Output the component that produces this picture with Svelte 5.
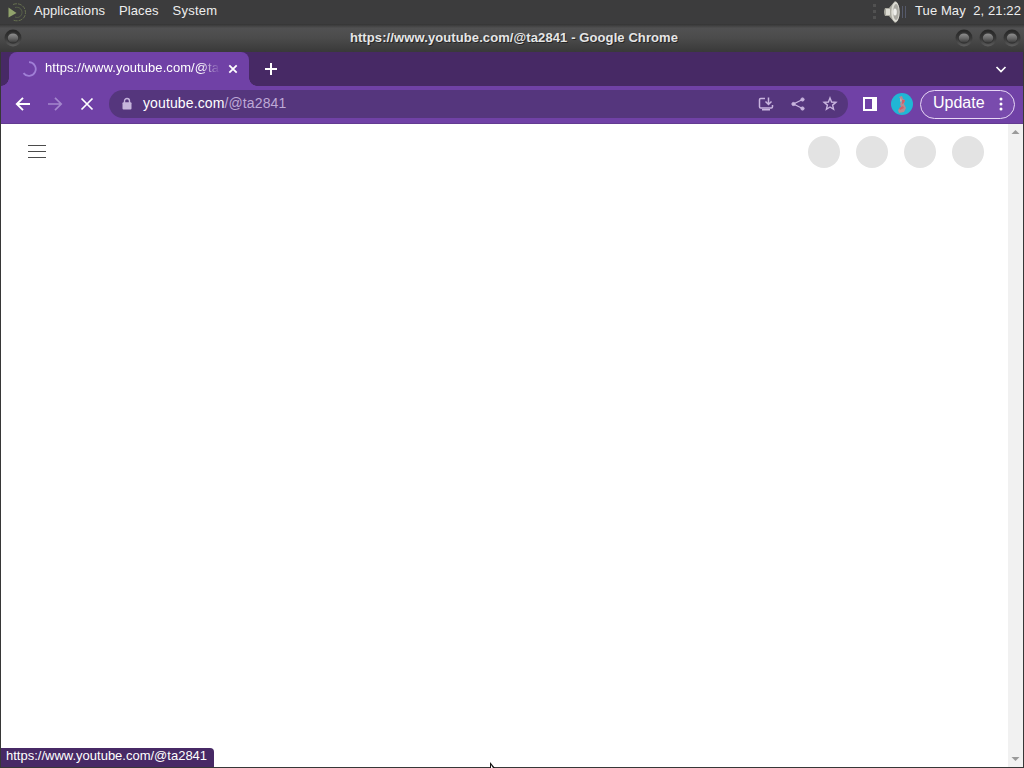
<script>
	const pageUrl = 'https://www.youtube.com/@ta2841';
	const menus = ['Applications', 'Places', 'System'];
	const windowButtons = ['minimize', 'maximize', 'close'];
	const placeholders = [1, 2, 3, 4];
</script>

{#snippet orb()}
	<svg class="orb" width="20" height="20" viewBox="0 0 20 20">
		<defs>
			<linearGradient id="orbRing" x2="0" y2="1">
				<stop offset="0" stop-color="#252525" />
				<stop offset=".5" stop-color="#363636" />
				<stop offset="1" stop-color="#5e5e5e" />
			</linearGradient>
			<linearGradient id="orbFace" x2="0" y2="1">
				<stop offset="0" stop-color="#8f8f8f" />
				<stop offset=".55" stop-color="#666" />
				<stop offset="1" stop-color="#3c3c3c" />
			</linearGradient>
		</defs>
		<circle cx="10" cy="10" r="8.5" fill="url(#orbRing)" />
		<circle cx="10" cy="9.7" r="6" fill="#333" />
		<ellipse cx="10" cy="10" rx="5.2" ry="4.5" fill="url(#orbFace)" />
	</svg>
{/snippet}

<div class="desktop">
	<header class="panel">
		<svg class="distro" width="20" height="22" viewBox="0 0 20 22" fill="none">
			<path d="M6 3.500C12 1 18.500 5 18.500 11.500S12 21.500 6 19" stroke="#66704f" stroke-dasharray="4 1" />
			<path d="M8 6.500c4-1 7 1.500 7 5s-3.500 6-7 4.500" stroke="#59634a" />
			<path d="m1.500 6.500 8 5.500-8 4.500z" fill="#91a36c" />
		</svg>
		<nav class="menus">
			{#each menus as menu}
				<span>{menu}</span>
			{/each}
		</nav>
		<svg class="volume" width="38" height="24" viewBox="0 0 38 24">
			<path d="M3 4h3v3H3zM3 10h3v3H3zM3 16h3v3H3z" fill="#515151" />
			<path d="M15 8h4l6-7q4 1 4 11t-4 11l-6-7h-4q-2-4 0-8z" fill="#aaa99f" />
			<path d="M16 9h4v6h-4z" fill="#dddcd3" />
			<ellipse cx="25.500" cy="12" rx="4.200" ry="10" fill="#deddd5" />
			<ellipse cx="26" cy="12" rx="2.800" ry="8" fill="#aaa9a2" />
			<ellipse cx="25" cy="12" rx="1.800" ry="3.500" fill="#eeeeea" />
			<path d="M32.500 6v12M35.500 6v12" stroke="#55596a" fill="none" />
		</svg>
		<span class="clock">Tue May&nbsp; 2, 21:22</span>
	</header>

	<div class="titlebar">
		{@render orb()}
		<span class="window-title">{pageUrl} - Google Chrome</span>
		<div class="window-buttons">
			{#each windowButtons as button (button)}
				{@render orb()}
			{/each}
		</div>
	</div>

	<main class="browser">
		<div class="tabs">
			<div class="tab">
				<svg class="spinner" width="16" height="16" viewBox="0 0 16 16" fill="none">
					<path d="M8 1.200a6.800 6.800 0 1 1-5.500 10.900" stroke="#a07fd6" stroke-width="1.800" />
				</svg>
				<span class="tab-title">{pageUrl}</span>
				<svg class="tab-close" width="10" height="10" viewBox="0 0 10 10">
					<path d="m1.300 1.300 7.400 7.400m0-7.400-7.400 7.400" stroke="#fff" stroke-width="1.800" />
				</svg>
			</div>
			<svg class="new-tab" width="12" height="12" viewBox="0 0 12 12">
				<path d="M6 0v12M0 6h12" stroke="#fff" stroke-width="2" />
			</svg>
			<svg class="tab-search" width="12" height="12" viewBox="0 0 12 12">
				<path d="m1.500 4 4.500 4.500L10.500 4" stroke="#fff" stroke-width="1.700" fill="none" />
			</svg>
		</div>

		<div class="toolbar">
			<svg width="16" height="16" viewBox="0 0 16 16" fill="none">
				<path d="M15 8H2m6-6.200L1.800 8 8 14.200" stroke="#fff" stroke-width="1.900" />
			</svg>
			<svg width="16" height="16" viewBox="0 0 16 16" fill="none">
				<path d="M1 8h13M8 1.800 14.200 8 8 14.200" stroke="#a486cd" stroke-width="1.700" />
			</svg>
			<svg width="16" height="16" viewBox="0 0 16 16">
				<path d="m2.500 2.500 11 11m0-11-11 11" stroke="#fff" stroke-width="1.700" />
			</svg>
			<div class="address">
				<svg width="10" height="14" viewBox="0 0 10 14">
					<path d="M2.500 6V4a2.500 2.500 0 0 1 5 0v2" fill="none" stroke="#c6b5dc" stroke-width="1.400" />
					<rect x=".5" y="5.200" width="9" height="7.300" rx="1" fill="#c6b5dc" />
				</svg>
				<span class="url"><b>youtube.com</b>/@ta2841</span>
				<div class="actions">
					<svg width="16" height="16" viewBox="0 0 16 16" fill="none" stroke="#c9b5df" stroke-width="1.500">
						<path d="M7 2.500H2.700q-1.200 0-1.200 1.200v7q0 1.200 1.200 1.200h10.600q1.200 0 1.200-1.200V9M4 13.700h8" />
						<path d="M10.500 1.500V8M7.500 5.500l3 3 3-3" />
					</svg>
					<svg width="16" height="16" viewBox="0 0 16 16" stroke="#c9b5df" fill="#c9b5df">
						<path d="m12.500 3.500-9 4.500 9 4.500" fill="none" stroke-width="1.300" />
						<circle cx="12.500" cy="3.500" r="1.600" />
						<circle cx="3.500" cy="8" r="1.600" />
						<circle cx="12.500" cy="12.500" r="1.600" />
					</svg>
					<svg width="16" height="16" viewBox="0 0 16 16" fill="none" stroke="#c9b5df" stroke-width="1.400">
						<path d="m8 2 1.600 4 4.300.3-3.300 2.800 1 4.200L8 11l-3.600 2.300 1-4.200-3.300-2.800L6.400 6z" />
					</svg>
				</div>
			</div>
			<svg class="side-panel" width="14" height="14" viewBox="0 0 14 14">
				<path d="M1 1h12v12H1z" fill="none" stroke="#fff" stroke-width="2" />
				<path d="M9 1h5v12H9z" fill="#fff" />
			</svg>
			<svg class="avatar" width="22" height="22" viewBox="0 0 22 22">
				<circle cx="11" cy="11" r="11" fill="#20b6d5" />
				<path d="m8 4 3-1 1 3 2 1-1 4 2 4-2 4-5 1-1-3 3-3-1-3 2-3z" fill="#b98b91" />
				<path d="m11 7 3 0-1 3-2 1zM8 15l4-2 1 2-4 2z" fill="#cf606c" />
				<path d="m9 5 2 2-1 3-1-2z" fill="#c9a9a9" />
			</svg>
			<div class="update">
				<span>Update</span>
				<svg width="4" height="14" viewBox="0 0 4 14" fill="#fff">
					<circle cx="2" cy="2" r="1.500" />
					<circle cx="2" cy="7" r="1.500" />
					<circle cx="2" cy="12" r="1.500" />
				</svg>
			</div>
		</div>

		<div class="viewport">
			<div class="masthead">
				<svg class="guide" width="18" height="13" viewBox="0 0 18 13">
					<path d="M0 .5h18M0 6.500h18M0 12.500h18" stroke="#4b4b4b" />
				</svg>
				<div class="placeholders">
					{#each placeholders as item (item)}
						<i></i>
					{/each}
				</div>
			</div>
			<div class="scrollbar">
				<svg width="9" height="5" viewBox="0 0 9 5"><path d="m.5 5 4-4 4 4z" fill="#9a9a9a" /></svg>
				<svg width="9" height="5" viewBox="0 0 9 5"><path d="m.5 0 4 4 4-4z" fill="#9a9a9a" /></svg>
			</div>
		</div>
	</main>

	<div class="status">{pageUrl}</div>
	<svg class="cursor" width="8" height="6" viewBox="0 0 8 6">
		<path d="M1 0v6h5z" fill="#151515" />
		<path d="M2 3v3h2z" fill="#fff" />
	</svg>
</div>

<style>
	:global(body) {
		margin: 0;
		overflow: hidden;
	}

	.desktop {
		position: relative;
		display: flex;
		flex-direction: column;
		width: 1024px;
		height: 768px;
		overflow: hidden;
		background: #373737;
		font-family: 'Liberation Sans', Arial, sans-serif;
		font-size: 13px;
		color: #fff;
		white-space: nowrap;
	}

	svg {
		display: block;
		flex-shrink: 0;
	}

	.panel {
		display: flex;
		align-items: center;
		box-sizing: border-box;
		height: 24px;
		padding: 0 3px 0 7px;
		background: #3c3c3d;
		color: #eee;
		line-height: 22px;
	}

	.menus {
		display: flex;
		gap: 14px;
		height: 24px;
		margin-left: 7px;
		letter-spacing: 0.08px;
	}

	.menus span:last-child {
		letter-spacing: 0.25px;
	}

	.volume {
		margin-left: auto;
	}

	.clock {
		height: 24px;
		margin-left: 7px;
		letter-spacing: 0.1px;
	}

	.titlebar {
		display: flex;
		align-items: center;
		justify-content: space-between;
		box-sizing: border-box;
		height: 28px;
		padding: 0 2px 0 3px;
		background: linear-gradient(#343434, #515152 15%, #4b4b4b 50%, #393939);
	}

	.window-title {
		margin-left: 51px;
		padding-bottom: 1px;
		color: #e6e6e6;
		font-weight: bold;
		font-size: 13px;
		letter-spacing: 0.1px;
		text-shadow: 1px 1px #252525;
	}

	.window-buttons {
		display: flex;
		gap: 4px;
	}

	.browser {
		display: flex;
		flex: 1;
		flex-direction: column;
		margin: 0 1px 1px;
		background: #fff;
	}

	.tabs {
		display: flex;
		align-items: center;
		height: 34px;
		padding: 0 16px 0 8px;
		background: #472965;
	}

	.tab {
		position: relative;
		display: flex;
		align-items: center;
		box-sizing: border-box;
		width: 240px;
		height: 34px;
		padding: 0 11px 0 12px;
		border-radius: 8px 8px 0 0;
		background: #7041a6;
	}

	.tab::before,
	.tab::after {
		content: '';
		position: absolute;
		bottom: 0;
		width: 8px;
		height: 8px;
	}

	.tab::before {
		left: -8px;
		background: radial-gradient(circle at 0 0, #472965 7.5px, #7041a6 8px);
	}

	.tab::after {
		right: -8px;
		background: radial-gradient(circle at 100% 0, #472965 7.5px, #7041a6 8px);
	}

	/* long titles fade out before the close button */
	.tab-title {
		width: 175px;
		margin: 0 8px;
		padding-bottom: 3px;
		overflow: hidden;
		letter-spacing: 0.07px;
		mask-image: linear-gradient(90deg, #000 155px, transparent 175px);
	}

	.new-tab {
		margin-left: 16px;
	}

	.tab-search {
		margin-left: auto;
	}

	.toolbar {
		display: flex;
		align-items: center;
		gap: 16px;
		box-sizing: border-box;
		height: 38px;
		padding: 0 8px 2px 14px;
		border-bottom: 1px solid #633b91;
		background: #7041a6;
	}

	.address {
		display: flex;
		align-items: center;
		box-sizing: border-box;
		width: 739px;
		height: 28px;
		margin-left: -2px;
		padding: 0 10px 0 13px;
		border-radius: 14px;
		background: #55367d;
	}

	.url {
		margin-left: 11px;
		padding-bottom: 1px;
		color: #bea9d6;
		font-size: 14px;
		letter-spacing: 0.12px;
	}

	.url b {
		color: #fff;
		font-weight: normal;
	}

	.actions {
		display: flex;
		gap: 16px;
		margin-left: auto;
	}

	.side-panel {
		margin-left: -1px;
	}

	.avatar {
		margin-left: -2px;
	}

	.update {
		display: flex;
		align-items: center;
		justify-content: space-between;
		box-sizing: border-box;
		width: 95px;
		height: 29px;
		margin: 1px 0 0 -9px;
		padding: 0 11px 0 12px;
		border: 1px solid #e7d7f5;
		border-radius: 15px;
		background: #794bad;
		font-size: 16px;
	}

	.update span {
		padding-bottom: 3px;
	}

	.viewport {
		display: flex;
		flex: 1;
	}

	.masthead {
		display: flex;
		align-items: center;
		justify-content: space-between;
		flex: 1;
		height: 56px;
		padding: 0 24px 0 27px;
	}

	.guide {
		margin-top: -1px;
	}

	.placeholders {
		display: flex;
		gap: 16px;
	}

	.placeholders i {
		width: 32px;
		height: 32px;
		border-radius: 50%;
		background: #e3e3e3;
	}

	.scrollbar {
		display: flex;
		flex-direction: column;
		align-items: center;
		justify-content: space-between;
		box-sizing: border-box;
		width: 15px;
		padding: 5px 0;
		background: #f1f1f1;
	}

	.status {
		position: absolute;
		bottom: 1px;
		left: 1px;
		box-sizing: border-box;
		width: 213px;
		height: 19px;
		padding-left: 5px;
		border-top-right-radius: 4px;
		background: #472965;
		line-height: 16px;
	}

	.cursor {
		position: absolute;
		bottom: 0;
		left: 489px;
	}
</style>
